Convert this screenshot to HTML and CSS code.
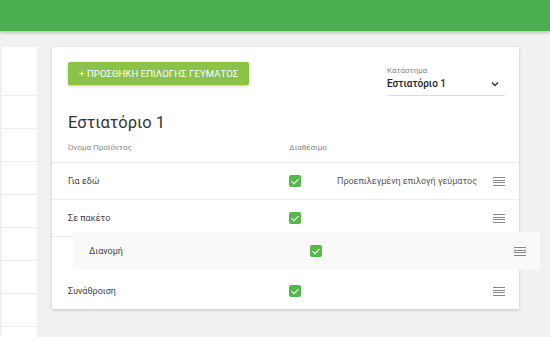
FILE: index.html
```html
<!DOCTYPE html>
<html lang="el">
<head>
  <meta charset="UTF-8" />
  <meta name="viewport" content="width=device-width, initial-scale=1.0"/>
  <title>Επιλογές γεύματος</title>
  <link rel="stylesheet" href="styles.css">
</head>
<body>
  <!-- Top bar -->
  <header class="topbar"></header>

  <div class="content">
    <!-- Side list -->
    <aside class="sidebar">
      <div class="side-head"></div>
      <div class="side-item"></div>
      <div class="side-item"></div>
      <div class="side-item"></div>
      <div class="side-item"></div>
      <div class="side-item"></div>
      <div class="side-item"></div>
      <div class="side-item"></div>
    </aside>

    <!-- Main card -->
    <main class="card">
      <div class="card-top">
        <button class="add-btn">+ Προσθήκη επιλογής γεύματος</button>
        <div class="select">
          <label class="select-label">Κατάστημα</label>
          <div class="select-value">
            <span>Εστιατόριο 1</span>
            <svg class="chevron" width="8" height="6" viewBox="0 0 8 6"><path d="M1 1.5 L4 4.5 L7 1.5" fill="none" stroke="#333" stroke-width="1.5"/></svg>
          </div>
        </div>
      </div>

      <h1 class="title">Εστιατόριο 1</h1>

      <div class="row head">
        <span class="name">Όνομα Προϊόντος</span>
        <span class="avail">Διαθέσιμο</span>
      </div>

      <div class="row">
        <span class="name">Για εδώ</span>
        <span class="avail"><span class="check"></span></span>
        <span class="note">Προεπιλεγμένη επιλογή γεύματος</span>
        <span class="handle"></span>
      </div>
      <div class="row">
        <span class="name">Σε πακέτο</span>
        <span class="avail"><span class="check"></span></span>
        <span class="note"></span>
        <span class="handle"></span>
      </div>
      <div class="row slot"></div>
      <div class="row last">
        <span class="name">Συνάθροιση</span>
        <span class="avail"><span class="check"></span></span>
        <span class="note"></span>
        <span class="handle"></span>
      </div>

      <!-- row being dragged -->
      <div class="row dragging">
        <span class="name">Διανομή</span>
        <span class="avail"><span class="check"></span></span>
        <span class="note"></span>
        <span class="handle"></span>
      </div>
    </main>
  </div>
</body>
</html>
```

FILE: styles.css
```css
  body {
    margin: 0;
    font-family: Roboto, "Noto Sans", sans-serif;
    background-color: #f1f1f1;
    color: #333;
    height: 337px;
    overflow: hidden;
  }

  .topbar {
    height: 31px;
    background-color: #4caf50;
    box-shadow: 0 2px 3px rgba(0, 0, 0, 0.2);
  }

  .content {
    display: flex;
    align-items: flex-start;
    padding-top: 16px;
  }

  .sidebar {
    margin-left: 2px;
    width: 35px;
    background: #fff;
    height: 300px;
  }

  .side-head {
    height: 48px;
    border-bottom: 1px solid #ececec;
  }

  .side-item {
    height: 32px;
    border-bottom: 1px solid #ececec;
  }

  .card {
    position: relative;
    margin-left: 15px;
    width: 467px;
    background: #fff;
    box-shadow: 0 1px 3px rgba(0, 0, 0, 0.2);
  }

  .card-top {
    display: flex;
    justify-content: space-between;
    align-items: flex-start;
    padding: 15px 14px 0 16px;
  }

  .add-btn {
    height: 23px;
    padding: 0 11px;
    background: #8bc34a;
    color: #fff;
    border: none;
    border-radius: 2px;
    font-family: inherit;
    font-size: 9.5px;
    letter-spacing: 0.1px;
    text-transform: uppercase;
    box-shadow: 0 1px 3px rgba(0, 0, 0, 0.25);
  }

  .select {
    width: 118px;
    padding-top: 4px;
  }

  .select-label {
    display: block;
    font-size: 8px;
    color: #888;
  }

  .select-value {
    display: flex;
    justify-content: space-between;
    align-items: center;
    font-size: 10px;
    font-weight: 500;
    color: #222;
    padding: 3px 0 6px;
    border-bottom: 1px solid #ddd;
  }

  .chevron {
    margin-right: 6px;
  }

  .title {
    margin: 17px 0 0 16px;
    font-size: 16.5px;
    font-weight: 400;
    color: #333;
  }

  .row {
    display: flex;
    align-items: center;
    height: 36px;
    padding: 0 14px 0 16px;
    border-bottom: 1px solid #eee;
    font-size: 9px;
    color: #444;
  }

  .row.head {
    height: 30px;
    font-size: 8px;
    color: #888;
  }

  .row.slot {
    border-bottom: none;
  }

  .row.last {
    border-bottom: none;
  }

  .row.dragging {
    position: absolute;
    left: 21px;
    top: 185px;
    width: 437px;
    background: #f9f9f9;
    border-bottom: none;
    height: 38px;
  }

  .name {
    width: 221px;
  }

  .avail {
    width: 40px;
  }

  .note {
    flex: 1;
    text-align: right;
    color: #555;
    margin-right: 16px;
  }

  .check {
    display: block;
    width: 12px;
    height: 12px;
    border-radius: 2px;
    background: #55b74a;
    position: relative;
  }

  .check::after {
    content: "";
    position: absolute;
    left: 3.5px;
    top: 2px;
    width: 3px;
    height: 6px;
    border: solid #fff;
    border-width: 0 1.5px 1.5px 0;
    transform: rotate(45deg);
  }

  .handle {
    width: 12px;
    height: 9px;
    background: repeating-linear-gradient(#888 0 1px, transparent 1px 2.6px);
  }
```
